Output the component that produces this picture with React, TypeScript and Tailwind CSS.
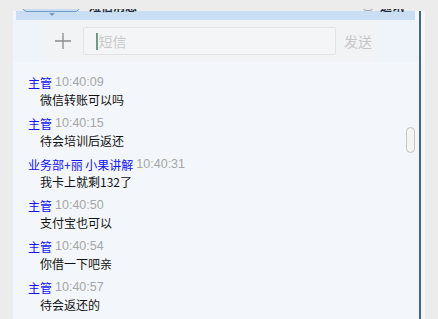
const messages = [
  { name: "主管", time: "10:40:09", text: "微信转账可以吗" },
  { name: "主管", time: "10:40:15", text: "待会培训后返还" },
  { name: "业务部+丽 小果讲解", time: "10:40:31", text: "我卡上就剩132了" },
  { name: "主管", time: "10:40:50", text: "支付宝也可以" },
  { name: "主管", time: "10:40:54", text: "你借一下吧亲" },
  { name: "主管", time: "10:40:57", text: "待会返还的" },
];

const cjk = "font-['Noto_Sans_CJK_SC','Liberation_Sans',sans-serif]";

export default function App() {
  return (
    <div className={`relative flex h-[319px] w-[438px] overflow-hidden bg-[#ececec] pt-[11px] pl-[13px] ${cjk}`}>
      {/* header row scrolled almost entirely out of view */}
      <div className="absolute left-0 top-[9px] z-10 h-[4px] w-[438px] overflow-hidden">
        <div className="absolute left-[22px] top-[-10px] h-[13px] w-[58px] rounded-[5px] border border-[#6f9bc6] bg-[#c9def2]" />
        <div className="absolute left-[89px] top-[-9px] text-[12px] leading-[12px] font-bold text-[#1e2a3a]">短信消息</div>
        <div className="absolute left-[363px] top-[-10px] h-[12px] w-[10px] rounded-[3px] border border-[#9aa4b0] bg-[#e4e8ec]" />
        <div className="absolute left-[380px] top-[-9px] text-[12px] leading-[12px] font-bold text-[#1e2a3a]">通讯</div>
      </div>
      <div className="absolute left-[49px] top-[13px] z-10 h-0 w-0 border-x-[3px] border-t-[3px] border-x-transparent border-t-[#6f9bc6]" />

      <div className="relative flex w-[406px] shrink-0 flex-col overflow-hidden bg-[#f3f7fb]">
        <div className="ml-[3px] mr-[4px] h-[9px] shrink-0 bg-[#c9def2]" />
        <div className="flex h-[42px] shrink-0 bg-[#eef4fa]">
          <div className="ml-[28px] flex w-[337px] items-center bg-[#f2f3f4]">
            <svg width="18" height="18" viewBox="0 0 18 18" className="ml-[13px]">
              <path d="M9 1v16M1 9h16" stroke="#8a8a8a" strokeWidth="1.3" />
            </svg>
            <div className="ml-[11px] flex h-[28px] w-[253px] items-center rounded-[2px] border border-[#e2e3e4] bg-[#f4f5f6] pl-[12px]">
              <span className="mr-[1px] h-[17px] w-[1.5px] bg-[#6f9a86]" />
              <span className="text-[14px] leading-[17px] text-[#c9c9c9]">短信</span>
            </div>
            <span className="ml-[8px] text-[14px] leading-[17px] text-[#c6c6c6]">发送</span>
          </div>
        </div>
        <div className="flex shrink-0 flex-col pt-[12px]">
          {messages.map((m, i) => (
            <div key={i} className="mb-[7px] flex flex-col text-[12px]">
              <div className="flex h-[17px] items-center gap-[3px] pl-[15px] leading-[17px]">
                <span className="text-[#1111ff]">{m.name}</span>
                <span className="font-['Liberation_Sans',sans-serif] text-[12.5px] text-[#a6a6a6]">{m.time}</span>
              </div>
              <div className="h-[17px] pl-[27px] leading-[17px] text-[#111]">{m.text}</div>
            </div>
          ))}
        </div>
        <div className="absolute left-[393px] top-[116px] h-[26px] w-[9px] rounded-full border border-[#c4c4c4] bg-[#f4f4f4]" />
      </div>
      <div className="w-[2px] shrink-0 bg-[#41688a]" />
      <div className="w-[4px] shrink-0 bg-[#f6f6f6]" />
    </div>
  );
}
